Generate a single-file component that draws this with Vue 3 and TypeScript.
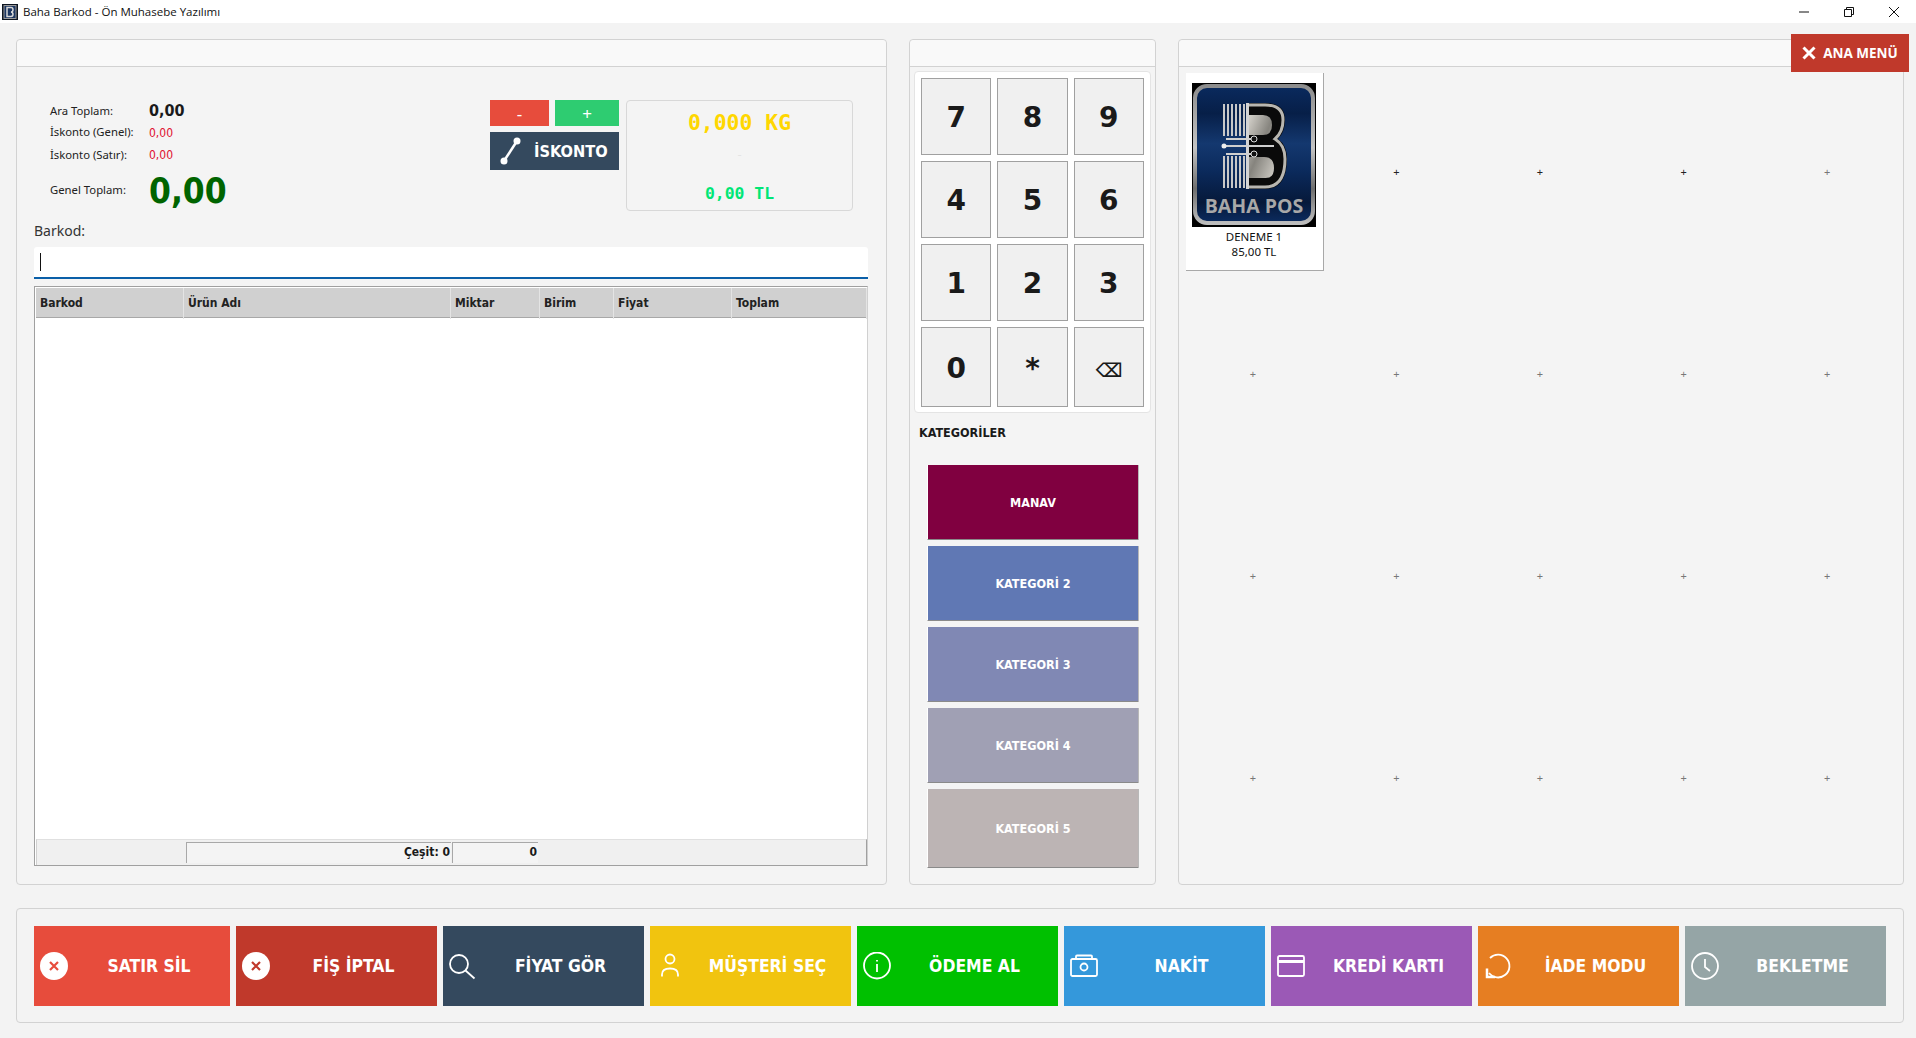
<script setup lang="ts">
const stats = [
  { label: "Ara Toplam:", value: "0,00", kind: "sub" },
  { label: "İskonto (Genel):", value: "0,00", kind: "disc" },
  { label: "İskonto (Satır):", value: "0,00", kind: "disc" },
  { label: "Genel Toplam:", value: "0,00", kind: "grand" },
];

const columns = ["Barkod", "Ürün Adı", "Miktar", "Birim", "Fiyat", "Toplam"];
const keys = ["7", "8", "9", "4", "5", "6", "1", "2", "3", "0", "*", "⌫"];

const categories = [
  { label: "MANAV", color: "#800040" },
  { label: "KATEGORİ 2", color: "#6078b4" },
  { label: "KATEGORİ 3", color: "#8088b4" },
  { label: "KATEGORİ 4", color: "#a0a0b4" },
  { label: "KATEGORİ 5", color: "#bcb4b4" },
];

// first slot holds the product, everything else is an empty "+"
const slots = Array.from({ length: 20 }, (_, index) => ({
  id: index,
  product: index === 0,
  dark: index > 0 && index < 4,
}));

const actions = [
  { label: "SATIR SİL", color: "#e74c3c", icon: "remove" },
  { label: "FİŞ İPTAL", color: "#c0392b", icon: "remove" },
  { label: "FİYAT GÖR", color: "#34495e", icon: "search" },
  { label: "MÜŞTERİ SEÇ", color: "#f1c40f", icon: "user" },
  { label: "ÖDEME AL", color: "#00c000", icon: "info" },
  { label: "NAKİT", color: "#3498db", icon: "camera" },
  { label: "KREDİ KARTI", color: "#9b59b6", icon: "card" },
  { label: "İADE MODU", color: "#e67e22", icon: "refresh" },
  { label: "BEKLETME", color: "#95a5a6", icon: "clock" },
];
</script>

<template>
  <div class="app">
    <header class="titlebar">
      <svg class="app-icon" viewBox="0 0 16 16">
        <rect width="16" height="16" fill="#0c1420" />
        <rect x="2" y="1.500" width="12" height="13" fill="#1b3560" stroke="#9a9a9a" />
        <path d="M5 3.500h4q2 0 2 2.200t-2 2.300q2 .2 2 2.300T9 12.500H5z" fill="none" stroke="#d8d8d8" stroke-width="1.500" />
      </svg>
      <span class="app-title">Baha Barkod - Ön Muhasebe Yazılımı</span>
      <div class="caption">
        <span class="caption-btn">
          <svg width="12" height="12" viewBox="0 0 12 12"><path d="M1 6h10" stroke="#111" fill="none" /></svg>
        </span>
        <span class="caption-btn">
          <svg width="12" height="12" viewBox="0 0 12 12"><path d="M1.500 3.500h7v7h-7zM3.500 3.500v-2h7v7h-2" stroke="#111" fill="none" /></svg>
        </span>
        <span class="caption-btn">
          <svg width="12" height="12" viewBox="0 0 12 12"><path d="M1 1l10 10M11 1L1 11" stroke="#111" fill="none" /></svg>
        </span>
      </div>
    </header>

    <main class="workspace">
      <section class="panel">
        <div class="panel-head"></div>
        <div class="sale-body">
          <div class="summary">
            <div class="stats">
              <template v-for="stat in stats" :key="stat.label">
                <span class="stat-label">{{ stat.label }}</span>
                <span :class="['stat-value', stat.kind]">{{ stat.value }}</span>
              </template>
            </div>
            <div class="summary-right">
              <div class="discount">
                <button class="mini minus" type="button">-</button>
                <button class="mini plus" type="button">+</button>
                <button class="discount-btn" type="button">
                  <svg width="26" height="30" viewBox="0 0 26 30">
                    <path d="M20 5L7 25" stroke="#fff" stroke-width="2.500" fill="none" />
                    <circle cx="20" cy="5" r="3.500" fill="#fff" />
                    <circle cx="7" cy="25" r="3.500" fill="#fff" />
                  </svg>
                  İSKONTO
                </button>
              </div>
              <div class="scale">
                <span class="scale-kg">0,000 KG</span>
                <span class="scale-dash">-</span>
                <span class="scale-tl">0,00 TL</span>
              </div>
            </div>
          </div>

          <label class="barcode-label">Barkod:</label>
          <div class="barcode-input"><span class="caret"></span></div>

          <div class="grid-box">
            <div class="grid-head">
              <span v-for="col in columns" :key="col" class="grid-col">{{ col }}</span>
            </div>
            <div class="grid-rows"></div>
            <div class="grid-foot">
              <span></span>
              <span class="foot-cell">Çeşit: 0</span>
              <span class="foot-cell">0</span>
            </div>
          </div>
        </div>
      </section>

      <section class="panel">
        <div class="panel-head"></div>
        <div class="middle-body">
          <div class="numpad">
            <button
              v-for="key in keys"
              :key="key"
              :class="['num-key', { erase: key === '⌫' }]"
              type="button"
            >
              {{ key }}
            </button>
          </div>
          <h3 class="cat-title">KATEGORİLER</h3>
          <div class="cat-list">
            <button
              v-for="cat in categories"
              :key="cat.label"
              class="cat-btn"
              type="button"
              :style="{ background: cat.color }"
            >
              {{ cat.label }}
            </button>
          </div>
        </div>
      </section>

      <section class="panel">
        <div class="panel-head"></div>
        <div class="product-grid">
          <div v-for="slot in slots" :key="slot.id" class="slot">
            <div v-if="slot.product" class="product-card">
              <svg class="logo" width="124" height="144" viewBox="0 0 124 144">
                <defs>
                  <linearGradient id="logoBlue" x1="0" y1="0" x2="0" y2="1">
                    <stop offset="0" stop-color="#0a2a5e" />
                    <stop offset=".2" stop-color="#071f48" />
                    <stop offset=".42" stop-color="#14386f" />
                    <stop offset=".62" stop-color="#0b2a5c" />
                    <stop offset=".85" stop-color="#06193a" />
                    <stop offset="1" stop-color="#0c2c60" />
                  </linearGradient>
                  <linearGradient id="logoRim" x1="0" y1="0" x2="0" y2="1">
                    <stop offset="0" stop-color="#8d8d8d" />
                    <stop offset=".45" stop-color="#c4c4c4" />
                    <stop offset=".75" stop-color="#6e6e6e" />
                    <stop offset="1" stop-color="#bdbdbd" />
                  </linearGradient>
                  <linearGradient id="logoSteel" x1="0" y1="0" x2="1" y2="1">
                    <stop offset="0" stop-color="#d8d5ce" />
                    <stop offset=".5" stop-color="#86847e" />
                    <stop offset="1" stop-color="#cfccc5" />
                  </linearGradient>
                </defs>
                <rect width="124" height="144" fill="#000" />
                <rect x="3" y="3" width="118" height="137" rx="12" fill="url(#logoBlue)" stroke="url(#logoRim)" stroke-width="4" />
                <path d="M56 20h18q19 0 19 17q0 12-7 19q9 6 9 20q0 30-22 30H56z" fill="#0a0a0a" />
                <path d="M56 22h17q18 0 18 15q0 12-8 19q10 6 10 20q0 28-20 28H56" fill="none" stroke="#b8b6b0" stroke-width="3" />
                <path d="M56 32h15q9 0 9 10t-9 10H56zM56 74h16q10 0 10 11t-10 10H56z" fill="url(#logoSteel)" />
                <g stroke="#c8c8c8" stroke-width="2">
                  <path d="M32 21v32M36 21v32M40 21v32M44 21v32M48 21v32M52 21v32" />
                  <path d="M32 73v32M36 73v32M40 73v32M44 73v32M48 73v32M52 73v32" />
                </g>
                <rect x="54" y="20" width="3" height="86" fill="#d4d4d4" />
                <path d="M34 56h28M32 63h50M34 71h28" stroke="#cfcfcf" stroke-width="2" fill="none" />
                <circle cx="62" cy="56" r="3" fill="#111" stroke="#ddd" />
                <circle cx="62" cy="71" r="3" fill="#111" stroke="#ddd" />
                <circle cx="32" cy="63" r="2.500" fill="#eee" />
                <text x="62" y="130" text-anchor="middle" class="logo-text">BAHA POS</text>
              </svg>
              <span>DENEME 1</span>
              <span>85,00 TL</span>
            </div>
            <span v-else :class="['slot-plus', { dark: slot.dark }]">+</span>
          </div>
        </div>
      </section>

      <button class="menu-btn" type="button">
        <svg width="14" height="14" viewBox="0 0 14 14"><path d="M1.500 1.500l11 11M12.500 1.500l-11 11" stroke="#fff" stroke-width="3" fill="none" /></svg>
        ANA MENÜ
      </button>
    </main>

    <footer class="actions">
      <button
        v-for="action in actions"
        :key="action.label"
        class="action-btn"
        type="button"
        :style="{ background: action.color }"
      >
        <svg class="action-icon" width="28" height="28" viewBox="0 0 28 28" fill="none" stroke="#fff" stroke-width="1.800">
          <template v-if="action.icon === 'remove'">
            <circle cx="14" cy="14" r="14" fill="#fff" stroke="none" />
            <path d="M10 10l8 8M18 10l-8 8" :stroke="action.color" stroke-width="2.200" />
          </template>
          <template v-else-if="action.icon === 'search'">
            <circle cx="10" cy="12" r="9" />
            <path d="M16.500 18.500l9 8" />
          </template>
          <template v-else-if="action.icon === 'user'">
            <circle cx="14" cy="7" r="4.500" />
            <path d="M6 24.500v-2q0-6 8-6t8 6v2" />
          </template>
          <template v-else-if="action.icon === 'info'">
            <circle cx="14" cy="13.500" r="13" />
            <path d="M14 8v1.500M14 12v8" />
          </template>
          <template v-else-if="action.icon === 'camera'">
            <rect x="1" y="7" width="26" height="17" rx="1.500" />
            <path d="M6 7V4.500q0-1 1-1h14q1 0 1 1V7" />
            <circle cx="14" cy="15" r="3.500" />
          </template>
          <template v-else-if="action.icon === 'card'">
            <rect x="1" y="4" width="26" height="20" rx="1.500" />
            <path d="M1 9.500h26" stroke-width="3" />
          </template>
          <template v-else-if="action.icon === 'refresh'">
            <path d="M6 6A11.400 11.400 0 1 1 5 21" />
            <path d="M3 16.500V25h8" stroke-width="2.500" />
          </template>
          <template v-else>
            <circle cx="14" cy="14" r="13" />
            <path d="M14 7v8l5 4" />
          </template>
        </svg>
        <span class="action-label">{{ action.label }}</span>
      </button>
    </footer>
  </div>
</template>

<style>
html,
body {
  margin: 0;
  background: #f3f3f3;
}
</style>

<style scoped>
.app {
  width: 1916px;
  height: 1038px;
  overflow: hidden;
  background: #f3f3f3;
  color: #1a1a1a;
  font-family: "Noto Sans", "Open Sans", sans-serif;
}

button {
  padding: 0;
  border: 0;
  font-family: inherit;
  cursor: pointer;
}

.titlebar {
  height: 23px;
  display: flex;
  align-items: center;
  background: #fff;
}

.app-icon {
  width: 16px;
  height: 16px;
  margin-left: 2px;
}

.app-title {
  margin-left: 5px;
  font-family: "Open Sans", sans-serif;
  font-size: 11.500px;
  color: #111;
}

.caption {
  margin-left: auto;
  display: flex;
}

.caption-btn {
  width: 45px;
  height: 23px;
  display: grid;
  place-items: center;
}

.workspace {
  position: relative;
  height: 846px;
  padding: 16px 12px 0 16px;
  display: grid;
  grid-template-columns: 871px 247px 726px;
  column-gap: 22px;
}

.panel {
  height: 846px;
  box-sizing: border-box;
  display: flex;
  flex-direction: column;
  border: 1px solid #d2d2d2;
  border-radius: 4px;
  background: #f4f4f4;
}

.panel-head {
  height: 26px;
  flex: none;
  background: #f9f9f9;
  border-bottom: 1px solid #d2d2d2;
  border-radius: 4px 4px 0 0;
}

.menu-btn {
  position: absolute;
  top: 11px;
  right: 7px;
  width: 118px;
  height: 38px;
  display: flex;
  align-items: center;
  justify-content: center;
  gap: 7px;
  background: #c0392b;
  color: #fff;
  font-family: "Open Sans", sans-serif;
  font-size: 13.500px;
  font-weight: 700;
}

.sale-body {
  flex: 1;
  padding: 33px 18px 0 17px;
  display: flex;
  flex-direction: column;
}

.summary {
  height: 111px;
  padding: 0 15px 0 16px;
  display: flex;
  justify-content: space-between;
}

.stats {
  display: grid;
  grid-template-columns: 99px auto;
  grid-template-rows: 20px 23px 22px 48px;
  align-items: center;
  justify-content: start;
}

.stat-label {
  font-size: 11.300px;
  color: #222;
}

.stat-value.sub {
  font-size: 16px;
  font-weight: 700;
  font-family: "DejaVu Sans", sans-serif;
  font-stretch: condensed;
}

.stat-value.disc {
  margin-top: 2px;
  font-size: 12px;
  color: #e01030;
  font-family: "DejaVu Sans", sans-serif;
  font-stretch: condensed;
}

.stat-value.grand {
  margin-top: 4px;
  font-size: 35px;
  font-weight: 700;
  color: #006400;
  font-family: "DejaVu Sans", sans-serif;
  font-stretch: condensed;
}

.summary-right {
  display: flex;
  gap: 7px;
}

.discount {
  width: 129px;
  display: grid;
  grid-template-columns: 59px 64px;
  grid-template-rows: 26px 38px;
  gap: 6px;
  align-content: start;
}

.mini {
  color: #fff;
  font-size: 17px;
}

.minus {
  background: #e74c3c;
}

.plus {
  background: #2ecc71;
}

.discount-btn {
  grid-column: span 2;
  display: flex;
  align-items: center;
  gap: 11px;
  padding: 0 0 0 7px;
  background: #34495e;
  color: #fff;
  font-family: "DejaVu Sans", sans-serif;
  font-stretch: condensed;
  font-size: 16.300px;
  font-weight: 700;
}

.scale {
  width: 227px;
  box-sizing: border-box;
  display: flex;
  flex-direction: column;
  align-items: center;
  padding-top: 9px;
  border: 1px solid #d8d8d8;
  border-radius: 4px;
  font-family: "DejaVu Sans Mono", monospace;
  font-weight: 700;
}

.scale-kg {
  font-size: 21.400px;
  line-height: 26px;
  color: #ffd700;
}

.scale-dash {
  margin-top: 12px;
  font-size: 12px;
  font-weight: 400;
  line-height: 14px;
  color: #e4e4e4;
}

.scale-tl {
  margin-top: 21px;
  font-size: 16.400px;
  line-height: 22px;
  color: #00e676;
}

.barcode-label {
  margin-top: 10px;
  font-size: 14px;
  line-height: 20px;
  color: #333;
}

.barcode-input {
  height: 24px;
  margin-top: 6px;
  padding: 6px 0 0 6px;
  background: #fff;
  border-bottom: 2px solid #0a5fa8;
  border-radius: 3px 3px 0 0;
}

.caret {
  display: block;
  width: 1px;
  height: 18px;
  background: #111;
}

.grid-box {
  height: 580px;
  margin-top: 7px;
  box-sizing: border-box;
  display: flex;
  flex-direction: column;
  border: 1px solid #a0a0a0;
  border-right-color: #d0d0d0;
  background: #fff;
  padding: 1px 0 0 1px;
}

.grid-head {
  height: 30px;
  display: grid;
  grid-template-columns: 148px 267px 89px 74px 118px 1fr;
  background: #d0d0d0;
  border-bottom: 1px solid #a8a8a8;
  box-sizing: border-box;
}

.grid-col {
  padding-left: 4px;
  border-right: 1px solid #e4e4e4;
  font-family: "DejaVu Sans", sans-serif;
  font-stretch: condensed;
  font-size: 12px;
  font-weight: 700;
  line-height: 31px;
  color: #222;
}

.grid-rows {
  flex: 1;
}

.grid-foot {
  height: 25px;
  display: grid;
  grid-template-columns: 148px 266px 87px 1fr;
  background: #f0f0f0;
  border-top: 1px solid #e0e0e0;
  border-left: 1px solid #d0d0d0;
  border-right: 1px solid #a0a0a0;
}

.foot-cell {
  margin: 2px 0 2px 1px;
  padding-right: 1px;
  background: #f4f4f4;
  border-top: 1px solid #a8a8a8;
  border-left: 1px solid #a8a8a8;
  text-align: right;
  font-family: "DejaVu Sans", sans-serif;
  font-stretch: condensed;
  font-size: 12px;
  font-weight: 700;
  line-height: 19px;
}

.middle-body {
  flex: 1;
  padding: 4px 4px 0 4px;
  display: flex;
  flex-direction: column;
}

.numpad {
  height: 342px;
  box-sizing: border-box;
  padding: 6px;
  display: grid;
  grid-template-columns: repeat(3, 1fr);
  grid-template-rows: 77px 77px 77px 80px;
  gap: 6px;
  background: #fff;
  border: 1px solid #e4e4e4;
  border-radius: 4px;
}

.num-key {
  padding-top: 2px;
  background: #f0f0f0;
  border: 1px solid #a0a0a0;
  color: #1a1a1a;
  font-family: "DejaVu Sans", sans-serif;
  font-size: 28px;
  font-weight: 700;
}

.num-key.erase {
  padding-top: 6px;
  font-size: 19px;
}

.cat-title {
  margin: 11px 0 0 5px;
  font-family: "DejaVu Sans", sans-serif;
  font-stretch: condensed;
  font-size: 12.500px;
  font-weight: 700;
  line-height: 18px;
}

.cat-list {
  margin: 23px 13px 0 13px;
  display: grid;
  grid-template-rows: repeat(4, 75px) 79px;
  row-gap: 6px;
}

.cat-btn {
  border: 0;
  border-left: 1px solid #fff;
  border-bottom: 1px solid #8a8a8a;
  box-shadow: 1px 0 0 #b8b8b8;
  color: #fff;
  font-family: "DejaVu Sans", sans-serif;
  font-stretch: condensed;
  font-size: 12.500px;
  font-weight: 700;
}

.product-grid {
  flex: 1;
  padding: 3px 4px 0 2px;
  display: grid;
  grid-template-columns: repeat(5, 1fr);
  grid-template-rows: repeat(4, 202px);
}

.slot {
  display: grid;
  place-items: center;
}

.slot-plus {
  font-size: 11px;
  line-height: 1;
  color: #777;
}

.slot-plus.dark {
  color: #222;
}

.product-card {
  align-self: start;
  justify-self: start;
  margin: 3px 0 0 5px;
  width: 138px;
  height: 198px;
  box-sizing: border-box;
  padding: 10px 1px 0 0;
  display: flex;
  flex-direction: column;
  align-items: center;
  background: #fff;
  border-right: 1px solid #a8a8a8;
  border-bottom: 1px solid #a8a8a8;
  font-size: 11.500px;
  line-height: 15px;
  color: #111;
}

.logo {
  margin-bottom: 2px;
  flex: none;
}

.logo-text {
  font-family: "Open Sans", sans-serif;
  font-size: 19.500px;
  font-weight: 700;
  fill: #a8a8a8;
}

.actions {
  width: 1888px;
  height: 115px;
  margin: 23px 0 0 16px;
  box-sizing: border-box;
  padding: 17px 17px 0;
  display: grid;
  grid-template-columns: 196px repeat(8, 201px);
  column-gap: 6px;
  grid-template-rows: 80px;
  border: 1px solid #d2d2d2;
  border-radius: 4px;
}

.action-btn {
  display: flex;
  align-items: center;
  padding-left: 6px;
  color: #fff;
}

.action-icon {
  flex: none;
}

.action-label {
  flex: 1;
  text-align: center;
  font-family: "DejaVu Sans", sans-serif;
  font-stretch: condensed;
  font-size: 17.400px;
  font-weight: 700;
}
</style>
